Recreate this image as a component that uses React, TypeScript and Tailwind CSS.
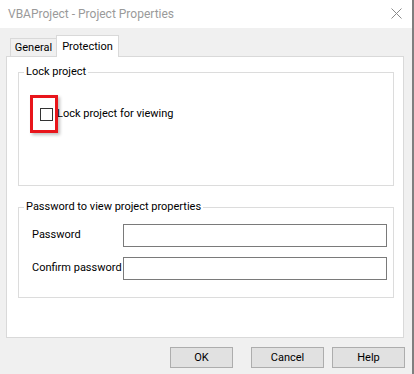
import React from "react";

const font = { fontFamily: "Roboto, 'Noto Sans', sans-serif" };

export default function App() {
  return (
    <div className="w-[414px] h-[374px] flex text-[11px] text-black" style={font}>
      <div className="w-[412px] flex flex-col">
        {/* Title bar */}
        <div className="h-[28px] bg-white flex items-center justify-between pl-[8px] pr-[10px]">
          <span className="text-[12px] text-[#9a9a9a]">VBAProject - Project Properties</span>
          <svg width="11" height="11" viewBox="0 0 11 11" className="mb-[2px]">
            <path d="M0.5 0.5 L10.5 10.5 M10.5 0.5 L0.5 10.5" stroke="#8a8a8a" strokeWidth="1" fill="none" />
          </svg>
        </div>

        {/* Body */}
        <div className="flex-1 bg-[#f0f0f0] pt-[7px] flex flex-col">
          {/* Tabs */}
          <div className="h-[22px] flex items-end pl-[10px]">
            <div className="h-[18px] w-[46px] mb-[1px] border-l border-t border-[#d9d9d9] bg-[#f0f0f0] flex items-center justify-center pt-[2px]">
              General
            </div>
            <div className="relative z-10 h-[22px] w-[63px] border-l border-t border-r border-[#d9d9d9] bg-white flex items-start justify-center pt-[3px]">
              Protection
            </div>
          </div>

          {/* Panel */}
          <div className="ml-[6px] -mt-[1px] w-[398px] h-[282px] bg-white border border-[#d9d9d9] px-[11px]">
            <fieldset className="mt-[8px] h-[121px] border border-[#dcdcdc] w-[376px]">
              <legend className="ml-[5px] px-[2px] leading-[14px]">Lock project</legend>
              <div className="relative ml-[21px] mt-[28px] flex items-center gap-[4px]">
                <div className="w-[13px] h-[13px] border border-[#333333] bg-white" />
                <span className="leading-[14px]">Lock project for viewing</span>
                <div className="absolute left-[-10px] top-[-12px] w-[28px] h-[38px] border-[3px] border-[#e8151b] shadow-[2px_2px_3px_rgba(0,0,0,0.25)]" />
              </div>
            </fieldset>

            <fieldset className="mt-[14px] h-[98px] border border-[#dcdcdc] w-[376px]">
              <legend className="ml-[5px] px-[2px] leading-[14px]">Password to view project properties</legend>
              <div className="mt-[10px] pl-[13px] flex items-center">
                <span className="w-[91px]">Password</span>
                <div className="w-[264px] h-[23px] border border-[#7a7a7a] bg-white" />
              </div>
              <div className="mt-[10px] pl-[13px] flex items-center">
                <span className="w-[91px]">Confirm password</span>
                <div className="w-[264px] h-[23px] border border-[#7a7a7a] bg-white" />
              </div>
            </fieldset>
          </div>

          {/* Buttons */}
          <div className="mt-[9px] flex justify-end pr-[7px]">
            <button className="w-[63px] h-[21px] bg-[#e1e1e1] border border-[#adadad] text-[11px] leading-none">OK</button>
            <button className="ml-[18px] w-[73px] h-[21px] bg-[#e1e1e1] border border-[#adadad] text-[11px] leading-none">Cancel</button>
            <button className="ml-[8px] w-[73px] h-[21px] bg-[#e1e1e1] border border-[#adadad] text-[11px] leading-none">Help</button>
          </div>
        </div>
      </div>
      <div className="w-[2px] bg-[#7f7f7f]" />
    </div>
  );
}
